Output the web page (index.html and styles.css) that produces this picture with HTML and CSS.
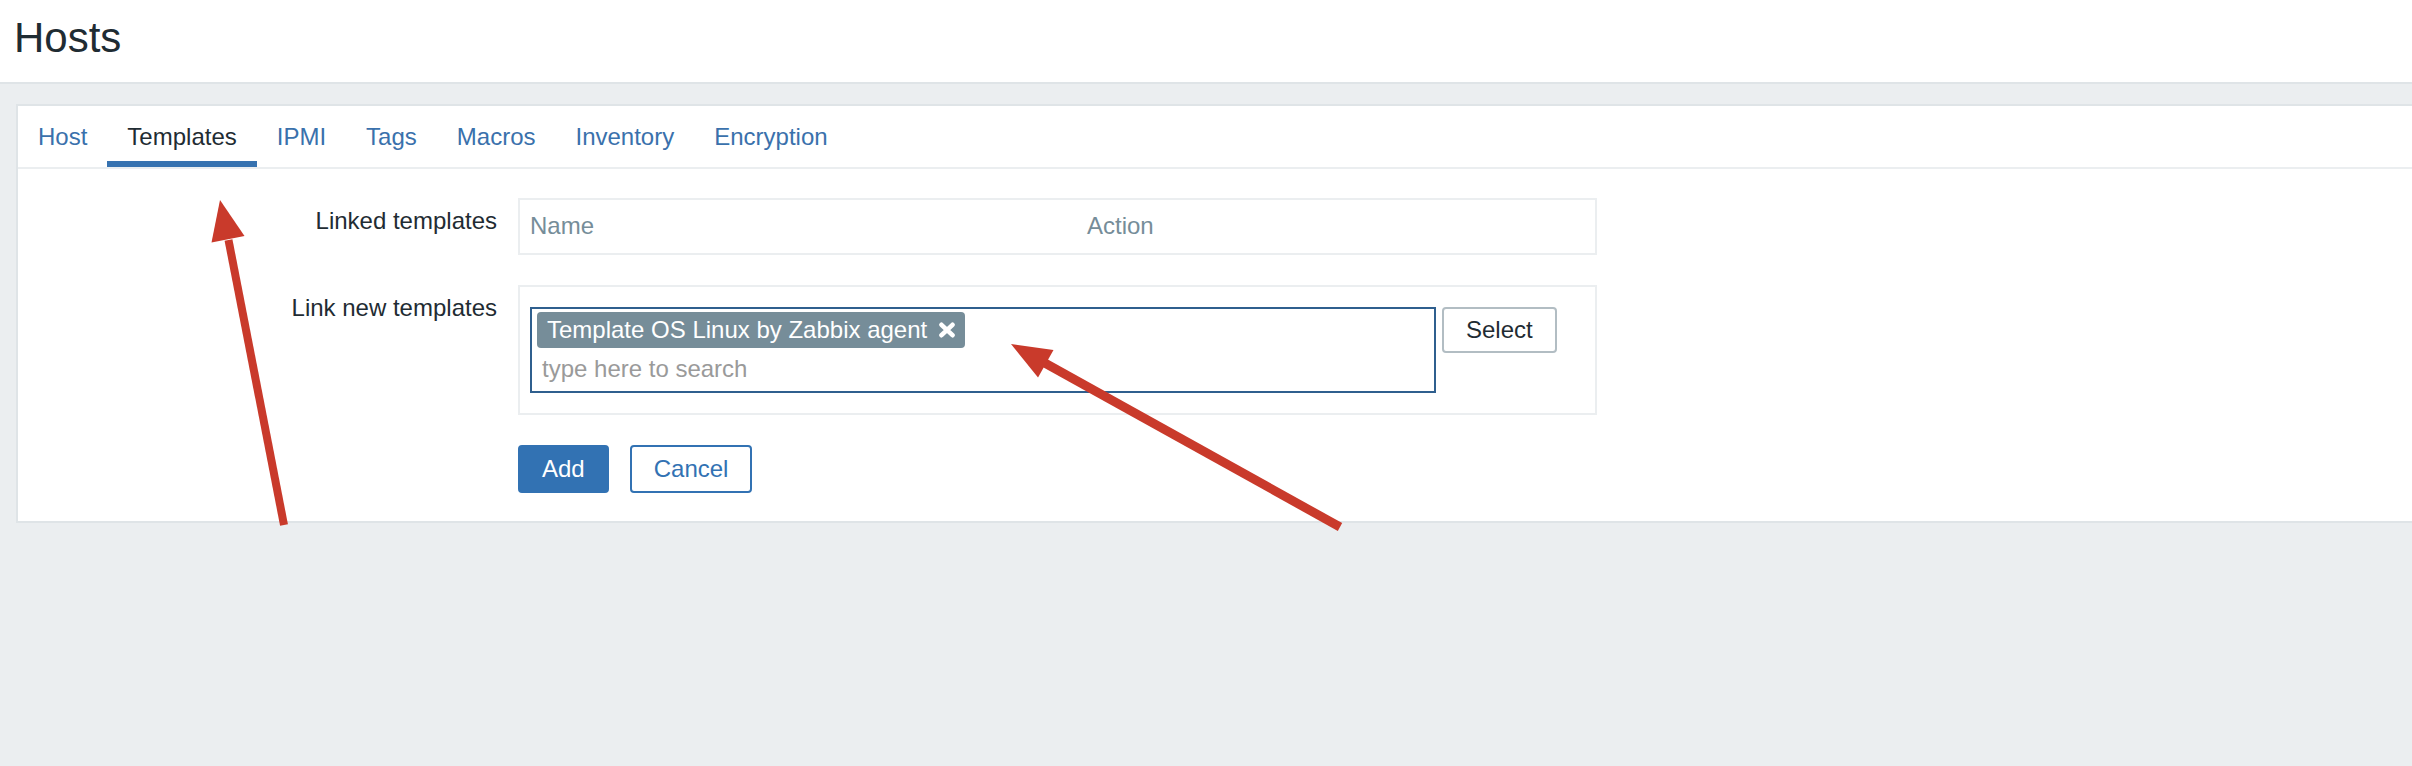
FILE: index.html
```html
<!DOCTYPE html>
<html lang="en">
<head>
<meta charset="utf-8">
<title>Hosts</title>
<link rel="stylesheet" href="styles.css">
</head>
<body>
<header class="page-header">
  <h1 class="page-title">Hosts</h1>
</header>
<main class="content">
  <section class="panel">
    <nav class="tabs">
      <a class="tab">Host</a>
      <a class="tab tab-active">Templates</a>
      <a class="tab">IPMI</a>
      <a class="tab">Tags</a>
      <a class="tab">Macros</a>
      <a class="tab">Inventory</a>
      <a class="tab">Encryption</a>
    </nav>
    <form class="form">
      <label class="form-label">Linked templates</label>
      <div class="linked-table">
        <div class="th th-name">Name</div>
        <div class="th">Action</div>
      </div>

      <label class="form-label">Link new templates</label>
      <div class="link-box">
        <div class="multiselect">
          <div class="chips">
            <span class="chip">Template OS Linux by Zabbix agent<svg class="chip-x" viewBox="0 0 18 16" width="18" height="16"><path d="M3.5 2.8 L14.5 13.2 M14.5 2.8 L3.5 13.2" stroke="#ffffff" stroke-width="4.6" stroke-linecap="round" fill="none"/></svg></span>
          </div>
          <div class="ms-search">type here to search</div>
        </div>
        <button type="button" class="btn-select">Select</button>
      </div>

      <div class="form-spacer"></div>
      <div class="form-actions">
        <button type="button" class="btn btn-primary">Add</button>
        <button type="button" class="btn btn-secondary">Cancel</button>
      </div>
    </form>
  </section>
</main>
<svg class="annotations" width="2412" height="766" viewBox="0 0 2412 766">
  <line x1="284" y1="525" x2="228.5" y2="240" stroke="#c93a2b" stroke-width="8"/>
  <polygon points="220,200 244.5,236 211.5,242.5" fill="#c93a2b"/>
  <line x1="1340" y1="527" x2="1043" y2="362" stroke="#c93a2b" stroke-width="9"/>
  <polygon points="1011,344 1053.5,350 1038,377.5" fill="#c93a2b"/>
</svg>
</body>
</html>
```

FILE: styles.css
```css
* {
  box-sizing: border-box;
}

html, body {
  margin: 0;
  padding: 0;
}

body {
  background: #ebeef0;
  font-family: "Liberation Sans", Arial, Helvetica, sans-serif;
  color: #1f2c33;
  min-height: 766px;
  position: relative;
  overflow: hidden;
}

.page-header {
  background: #ffffff;
  height: 84px;
  padding: 14px 14px 20px;
  border-bottom: 2px solid #dfe4e7;
}

.page-title {
  margin: 0;
  font-size: 42px;
  line-height: 48px;
  font-weight: normal;
  color: #1f2c33;
}

.content {
  padding: 20px 0 0 16px;
}

.panel {
  background: #ffffff;
  border: 2px solid #dfe4e7;
  border-right: none;
}

.tabs {
  display: flex;
  border-bottom: 2px solid #ebeef0;
}

.tab {
  display: block;
  height: 61px;
  line-height: 61px;
  padding: 0 20px;
  font-size: 24px;
  color: #3a71ac;
  text-decoration: none;
}

.tab-active {
  color: #1f2c33;
  box-shadow: inset 0 -6px 0 #3672b0;
}

.form {
  display: grid;
  grid-template-columns: 479px 1079px;
  column-gap: 21px;
  row-gap: 30px;
  padding: 29px 0 28px;
  font-size: 24px;
}

.form-label {
  text-align: right;
  padding-top: 9px;
  line-height: 28px;
  color: #1f2c33;
}

.linked-table {
  border: 2px solid #ebeef0;
  display: grid;
  grid-template-columns: 557px 1fr;
}

.th {
  padding: 12px 10px 13px;
  line-height: 28px;
  color: #768d99;
}

.link-box {
  border: 2px solid #ebeef0;
  padding: 20px 10px;
  display: flex;
  align-items: flex-start;
  gap: 6px;
}

.multiselect {
  width: 906px;
  border: 2px solid #2f5f8e;
  background: #ffffff;
}

.chips {
  padding: 3px 0 0 5px;
  display: flex;
}

.chip {
  display: inline-flex;
  align-items: center;
  background: #768d99;
  color: #ffffff;
  border-radius: 4px;
  padding: 4px 9px 4px 10px;
  line-height: 28px;
  font-size: 24px;
}

.chip-x {
  display: block;
  margin-left: 11px;
}

.ms-search {
  padding: 7px 10px 8px;
  line-height: 28px;
  color: #9a9a9a;
}

.btn-select {
  height: 46px;
  border: 2px solid #b2bdc3;
  border-radius: 4px;
  background: #ffffff;
  padding: 0 22px;
  font-family: inherit;
  font-size: 24px;
  line-height: 42px;
  color: #1f2c33;
}

.form-actions {
  display: flex;
  gap: 21px;
}

.btn {
  height: 48px;
  border: 2px solid #3272b3;
  border-radius: 4px;
  padding: 0 22px;
  font-family: inherit;
  font-size: 24px;
  line-height: 44px;
}

.btn-primary {
  background: #3272b3;
  color: #ffffff;
}

.btn-secondary {
  background: #ffffff;
  color: #3272b3;
}

.annotations {
  position: absolute;
  top: 0;
  left: 0;
  pointer-events: none;
}
```
